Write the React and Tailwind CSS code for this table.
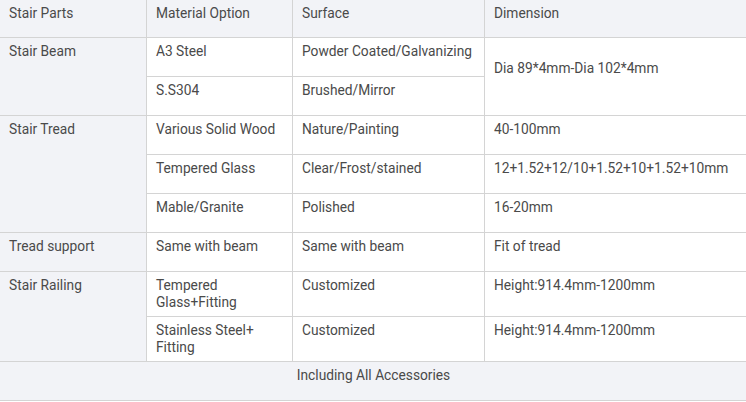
const cell = "border-b border-r border-[#d4d4d4] pl-[9px] pr-2 pt-[5px] leading-[17px]";
const side = "bg-[#f2f3f7]";

export default function App() {
  return (
    <div
      className="w-[746px] h-[402px] bg-white text-[13.75px] text-[#4a4a4a]"
      style={{ fontFamily: "Roboto, 'Liberation Sans', sans-serif" }}
    >
      <div className="grid grid-cols-[147px_146px_192px_1fr] grid-rows-[38px_39px_39px_39px_39px_39px_39px_45px_45px_39px]">
        {/* header */}
        <div className={`${cell} ${side}`}>Stair Parts</div>
        <div className={`${cell} ${side}`}>Material Option</div>
        <div className={`${cell} ${side}`}>Surface</div>
        <div className={`${cell} ${side} border-r-0`}>Dimension</div>

        {/* stair beam */}
        <div className={`${cell} ${side} row-span-2`}>Stair Beam</div>
        <div className={cell}>A3 Steel</div>
        <div className={cell}>Powder Coated/Galvanizing</div>
        <div className={`${cell} row-span-2 border-r-0 pt-[22px]`}>
          Dia 89*4mm-Dia 102*4mm
        </div>
        <div className={cell}>S.S304</div>
        <div className={cell}>Brushed/Mirror</div>

        {/* stair tread */}
        <div className={`${cell} ${side} row-span-3`}>Stair Tread</div>
        <div className={cell}>Various Solid Wood</div>
        <div className={cell}>Nature/Painting</div>
        <div className={`${cell} border-r-0`}>40-100mm</div>
        <div className={cell}>Tempered Glass</div>
        <div className={cell}>Clear/Frost/stained</div>
        <div className={`${cell} border-r-0`}>12+1.52+12/10+1.52+10+1.52+10mm</div>
        <div className={cell}>Mable/Granite</div>
        <div className={cell}>Polished</div>
        <div className={`${cell} border-r-0`}>16-20mm</div>

        {/* tread support */}
        <div className={`${cell} ${side}`}>Tread support</div>
        <div className={cell}>Same with beam</div>
        <div className={cell}>Same with beam</div>
        <div className={`${cell} border-r-0`}>Fit of tread</div>

        {/* railing */}
        <div className={`${cell} ${side} row-span-2`}>Stair Railing</div>
        <div className={cell}>Tempered Glass+Fitting</div>
        <div className={cell}>Customized</div>
        <div className={`${cell} border-r-0`}>Height:914.4mm-1200mm</div>
        <div className={cell}>Stainless Steel+ Fitting</div>
        <div className={cell}>Customized</div>
        <div className={`${cell} border-r-0`}>Height:914.4mm-1200mm</div>

        <div className={`${cell} ${side} col-span-4 border-r-0 text-center`}>
          Including All Accessories
        </div>
      </div>
    </div>
  );
}
